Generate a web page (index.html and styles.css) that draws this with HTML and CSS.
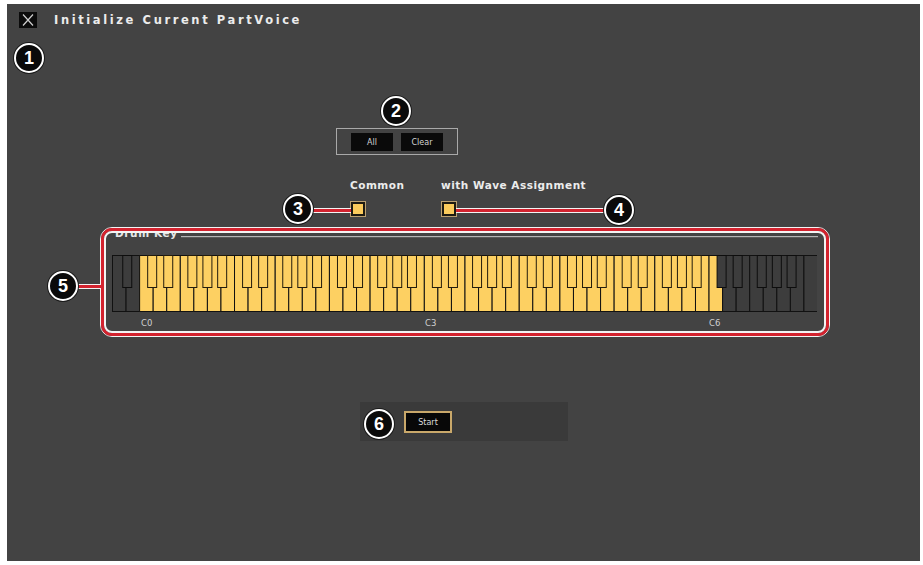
FILE: index.html
```html
<!DOCTYPE html>
<html>
<head>
<meta charset="utf-8">
<link rel="stylesheet" href="styles.css">
</head>
<body>
<div class="panel">
  <div class="header">
    <div class="close-btn">
      <svg width="18" height="16" viewBox="0 0 18 16"><path d="M4 2.5 L14 13.5 M14 2.5 L4 13.5" stroke="#cfcfcf" stroke-width="1.2" fill="none"/></svg>
    </div>
    <div class="title">Initialize Current PartVoice</div>
  </div>

  <div class="select-group">
    <div class="btn">All</div>
    <div class="btn">Clear</div>
  </div>

  <div class="check-row">
    <div class="check-col col-common">
      <div class="check-label">Common</div>
      <div class="checkbox"></div>
    </div>
    <div class="check-col">
      <div class="check-label">with Wave Assignment</div>
      <div class="checkbox"></div>
    </div>
  </div>

  <div class="frame-outer"><div class="frame-red"><div class="frame-in">
    <div class="fs-title"><span class="fs-text">Drum Key</span><div class="fs-line"></div></div>
    <svg id="kbd" class="keyboard" width="705" height="57" viewBox="0 0 705 57"></svg>
    <div class="key-labels"><span class="kl kl-c0">C0</span><span class="kl kl-c3">C3</span><span class="kl">C6</span></div>
  </div></div></div>

  <div class="start-panel"><div class="start-btn">Start</div></div>

  <div class="conn conn-3"></div>
  <div class="conn conn-4"></div>
  <div class="conn conn-5"></div>

  <div class="callout c1">1</div>
  <div class="callout c2">2</div>
  <div class="callout c3">3</div>
  <div class="callout c4">4</div>
  <div class="callout c5">5</div>
  <div class="callout c6">6</div>
</div>
<script src="script.js"></script>
</body>
</html>
```

FILE: styles.css
```css
html, body {
  margin: 0;
  padding: 0;
  background: #ffffff;
}
body {
  width: 923px;
  height: 565px;
  overflow: hidden;
  font-family: "DejaVu Sans", sans-serif;
}
.panel {
  position: relative;
  margin: 4px 0 0 7px;
  width: 913px;
  height: 557px;
  background: #434343;
  display: flex;
  flex-direction: column;
  align-items: flex-start;
}
.header {
  display: flex;
  align-items: center;
  margin: 8px 0 0 12px;
  height: 16px;
  gap: 17px;
}
.close-btn {
  width: 18px;
  height: 16px;
  background: #0b0b0b;
  display: flex;
}
.title {
  font-family: "DejaVu Sans", sans-serif;
  font-weight: bold;
  font-size: 11.5px;
  letter-spacing: 2.6px;
  color: #ececec;
  line-height: 16px;
}
.select-group {
  margin: 100px 0 0 329px;
  box-sizing: border-box;
  width: 122px;
  height: 27px;
  border: 1px solid #a9a9a9;
  padding: 4px 0 0 14px;
  display: flex;
  gap: 8px;
}
.btn {
  width: 42px;
  height: 18px;
  background: #0a0a0a;
  color: #d4d4d4;
  font-size: 8px;
  display: flex;
  align-items: center;
  justify-content: center;
}
.check-row {
  display: flex;
  margin: 24px 0 0 343px;
}
.check-col {
  display: flex;
  flex-direction: column;
  align-items: flex-start;
}
.col-common {
  width: 91px;
}
.check-label {
  font-family: "DejaVu Sans", sans-serif;
  font-weight: bold;
  font-size: 10.5px;
  letter-spacing: 0.5px;
  color: #ececec;
  line-height: 12px;
  height: 12px;
}
.checkbox {
  margin: 11px 0 0 1px;
  box-sizing: border-box;
  width: 14px;
  height: 14px;
  background: #fbcb5c;
  border: 2px solid #1d1a12;
  box-shadow: 0 0 0 1px #bba071;
}
.frame-outer {
  margin: 11px 0 0 93px;
  box-sizing: border-box;
  width: 730px;
  height: 110px;
  border: 1px solid #f4f4f4;
  border-radius: 12px;
}
.frame-red {
  height: 100%;
  box-sizing: border-box;
  border: 3px solid #d3232f;
  border-radius: 11px;
}
.frame-in {
  height: 100%;
  box-sizing: border-box;
  border: 2px solid #f4f4f4;
  border-radius: 8px;
  overflow: hidden;
  display: flex;
  flex-direction: column;
  align-items: flex-start;
}
.fs-title {
  display: flex;
  align-items: center;
  width: 100%;
  box-sizing: border-box;
  height: 11px;
  margin-top: -5px;
  padding: 0 6px 0 9px;
  gap: 3px;
}
.fs-text {
  font-family: "DejaVu Sans", sans-serif;
  font-weight: bold;
  font-size: 10.5px;
  letter-spacing: 0.6px;
  color: #e6e6e6;
  line-height: 11px;
}
.fs-line {
  flex: 1;
  height: 0;
  margin-top: 7px;
  border-top: 1px solid #b5b5b5;
  border-bottom: 1px solid #5a5a5a;
}
.keyboard {
  display: block;
  margin: 16px 0 0 6px;
}
.key-labels {
  display: flex;
  margin: 6px 0 0 35px;
  line-height: 10px;
}
.kl {
  font-size: 8.5px;
  color: #d0d0d0;
}
.kl-c0, .kl-c3 {
  width: 284px;
}
.start-panel {
  margin: 65px 0 0 353px;
  width: 208px;
  height: 39px;
  background: #3a3a3a;
  box-sizing: border-box;
  padding: 9px 0 0 44px;
}
.start-btn {
  box-sizing: border-box;
  width: 48px;
  height: 22px;
  border: 2px solid #c9a86a;
  background: #080808;
  color: #dcdcdc;
  font-size: 8px;
  display: flex;
  align-items: center;
  justify-content: center;
}
.callout {
  position: absolute;
  box-sizing: border-box;
  width: 30px;
  height: 30px;
  border-radius: 50%;
  background: #0a0a0a;
  border: 2.5px solid #ffffff;
  box-shadow: 0 0 0 1px #1a1a1a;
  color: #ffffff;
  font-family: "Liberation Sans", Arial, sans-serif;
  font-weight: bold;
  font-size: 18px;
  display: flex;
  align-items: center;
  justify-content: center;
  line-height: 1;
}
.c1 { left: 7px; top: 39px; }
.c2 { left: 374px; top: 92px; }
.c3 { left: 276px; top: 190px; }
.c4 { left: 597px; top: 191px; }
.c5 { left: 41px; top: 267px; }
.c6 { left: 357px; top: 405px; }
.conn {
  position: absolute;
  height: 3px;
  background: #d3232f;
  border-top: 1px solid #f4f4f4;
  border-bottom: 1px solid #f4f4f4;
}
.conn-3 { left: 302px; width: 42px; top: 204px; }
.conn-4 { left: 449px; width: 152px; top: 204px; }
.conn-5 { left: 68px; width: 26px; top: 280px; }
```

FILE: script.js
```js
(function () {
  var svg = document.getElementById('kbd');
  var NS = 'http://www.w3.org/2000/svg';
  var total = 52;
  var W = 705 / total;
  var H = 57;
  var BH = 32;
  var BW = 9;
  var letters = ['A', 'B', 'C', 'D', 'E', 'F', 'G'];
  var offs = { C: -1, D: 1.5, F: -1.5, G: 0, A: 1.2 };
  var yellow = '#fdd062';
  var dark = '#3d3d3d';
  function rect(x, y, w, h, fill, stroke) {
    var r = document.createElementNS(NS, 'rect');
    r.setAttribute('x', x);
    r.setAttribute('y', y);
    r.setAttribute('width', w);
    r.setAttribute('height', h);
    r.setAttribute('fill', fill);
    r.setAttribute('stroke', stroke);
    r.setAttribute('stroke-width', '1');
    svg.appendChild(r);
  }
  var i;
  for (i = 0; i < total; i++) {
    var inRange = i >= 2 && i <= 44;
    rect(i * W + 0.5, 0.5, W, H - 1, inRange ? yellow : dark, '#111');
  }
  for (i = 0; i < total - 1; i++) {
    var L = letters[i % 7];
    if (offs.hasOwnProperty(L)) {
      var cx = (i + 1) * W + offs[L];
      var inR = i >= 2 && i <= 43;
      rect(cx - BW / 2 + 0.5, 0.5, BW, BH, inR ? yellow : dark, inR ? '#231c0c' : '#0d0d0d');
    }
  }
})();
```
